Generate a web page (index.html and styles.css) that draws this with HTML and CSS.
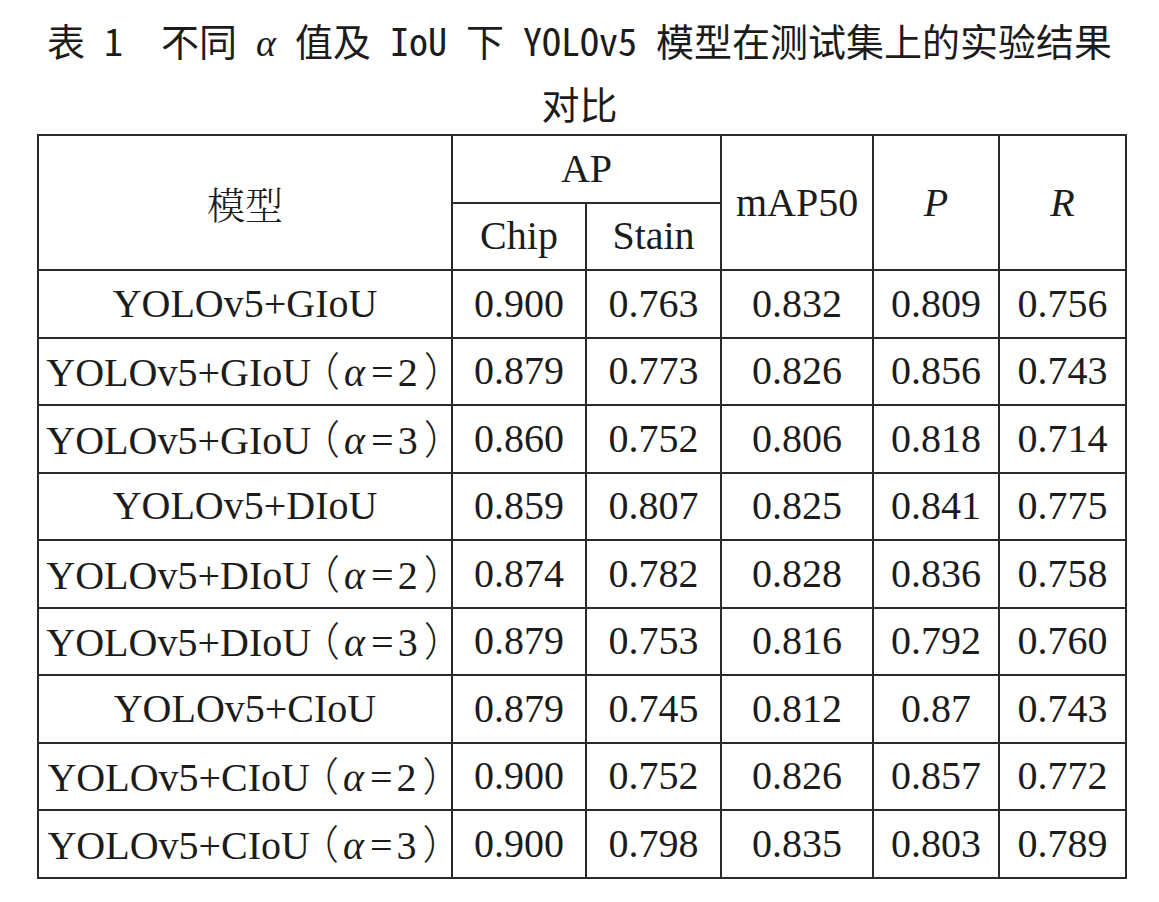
FILE: index.html
```html
<!DOCTYPE html>
<html lang="zh-CN">
<head>
<meta charset="utf-8">
<title>表1</title>
<link rel="stylesheet" href="styles.css">
</head>
<body>
<h1 class="title">表 1　不同 <span class="alpha">α</span> 值及 IoU 下 YOLOv5 模型在测试集上的实验结果<br>对比</h1>
<table class="results">
  <colgroup>
    <col class="c-model">
    <col class="c-chip">
    <col class="c-stain">
    <col class="c-map">
    <col class="c-p">
    <col class="c-r">
  </colgroup>
  <thead>
    <tr>
      <th rowspan="2" class="cjk">模型</th>
      <th colspan="2">AP</th>
      <th rowspan="2">mAP50</th>
      <th rowspan="2"><i>P</i></th>
      <th rowspan="2"><i>R</i></th>
    </tr>
    <tr>
      <th>Chip</th>
      <th>Stain</th>
    </tr>
  </thead>
  <tbody>
    <tr><td>YOLOv5+GIoU</td><td>0.900</td><td>0.763</td><td>0.832</td><td>0.809</td><td>0.756</td></tr>
    <tr><td>YOLOv5+GIoU<span class="lp">（</span><i class="al">α</i><span class="eq">=</span>2<span class="rp">）</span></td><td>0.879</td><td>0.773</td><td>0.826</td><td>0.856</td><td>0.743</td></tr>
    <tr><td>YOLOv5+GIoU<span class="lp">（</span><i class="al">α</i><span class="eq">=</span>3<span class="rp">）</span></td><td>0.860</td><td>0.752</td><td>0.806</td><td>0.818</td><td>0.714</td></tr>
    <tr><td>YOLOv5+DIoU</td><td>0.859</td><td>0.807</td><td>0.825</td><td>0.841</td><td>0.775</td></tr>
    <tr><td>YOLOv5+DIoU<span class="lp">（</span><i class="al">α</i><span class="eq">=</span>2<span class="rp">）</span></td><td>0.874</td><td>0.782</td><td>0.828</td><td>0.836</td><td>0.758</td></tr>
    <tr><td>YOLOv5+DIoU<span class="lp">（</span><i class="al">α</i><span class="eq">=</span>3<span class="rp">）</span></td><td>0.879</td><td>0.753</td><td>0.816</td><td>0.792</td><td>0.760</td></tr>
    <tr><td>YOLOv5+CIoU</td><td>0.879</td><td>0.745</td><td>0.812</td><td>0.87</td><td>0.743</td></tr>
    <tr><td>YOLOv5+CIoU<span class="lp">（</span><i class="al">α</i><span class="eq">=</span>2<span class="rp">）</span></td><td>0.900</td><td>0.752</td><td>0.826</td><td>0.857</td><td>0.772</td></tr>
    <tr><td>YOLOv5+CIoU<span class="lp">（</span><i class="al">α</i><span class="eq">=</span>3<span class="rp">）</span></td><td>0.900</td><td>0.798</td><td>0.835</td><td>0.803</td><td>0.789</td></tr>
  </tbody>
</table>
</body>
</html>
```

FILE: styles.css
```css
html, body {
  margin: 0;
  padding: 0;
  background: #ffffff;
}

body {
  width: 1159px;
  color: #1c1c1c;
}

.title {
  margin: 0;
  padding-top: 8px;
  height: 126px;
  font-family: "Noto Sans Mono CJK SC", "Noto Sans CJK SC", monospace;
  font-weight: 400;
  font-size: 38px;
  line-height: 63px;
  text-align: center;
  color: #1c1c1c;
}

.title .alpha {
  font-family: "Liberation Serif", serif;
  font-style: italic;
  line-height: 1;
}

.results {
  margin-left: 37px;
  border-collapse: separate;
  border-spacing: 0;
  table-layout: fixed;
  width: 1090px;
  border-left: 2px solid #2a2a2a;
  border-top: 2px solid #2a2a2a;
  font-family: "Liberation Serif", "Noto Serif CJK SC", "Noto Sans CJK SC", serif;
  font-size: 40px;
  color: #1c1c1c;
}

.c-model { width: 414px; }
.c-chip { width: 134px; }
.c-stain { width: 135px; }
.c-map { width: 152px; }
.c-p { width: 126px; }
.c-r { width: 127px; }

.results th,
.results td {
  border-right: 2px solid #2a2a2a;
  border-bottom: 2px solid #2a2a2a;
  padding: 0;
  height: 65.5px;
  text-align: center;
  vertical-align: middle;
  font-weight: 400;
  white-space: nowrap;
  line-height: 1;
}

.results i {
  font-style: italic;
}

.results .lp,
.results .rp {
  font-family: "Noto Sans CJK SC", sans-serif;
  font-weight: 300;
  font-feature-settings: "halt" 1;
}

.results .lp {
  margin-left: 9px;
}

.results .rp {
  margin-left: 6px;
}

.results .al {
  margin: 0 2px 0 4px;
}

.results .eq {
  margin: 0 4px;
}

.results .cjk {
  font-family: "Noto Serif CJK SC", "Noto Sans CJK SC", serif;
  font-size: 38px;
  font-weight: 300;
}
```
